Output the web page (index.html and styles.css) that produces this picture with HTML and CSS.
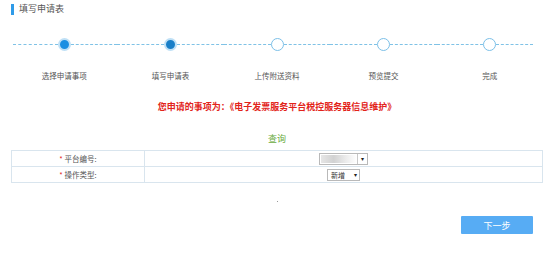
FILE: index.html
```html
<!DOCTYPE html>
<html lang="zh-CN">
<head>
    <meta charset="UTF-8">
    <title>填写申请表</title>
    <link rel="stylesheet" href="styles.css">
</head>
<body>
    <div class="page">
        <h2 class="title">填写申请表</h2>

        <ul class="steps">
            <li class="step done">
                <div class="track"><span class="line"></span><span class="dot"></span><span class="line"></span></div>
                <p>选择申请事项</p>
            </li>
            <li class="step current">
                <div class="track"><span class="line"></span><span class="dot"></span><span class="line"></span></div>
                <p>填写申请表</p>
            </li>
            <li class="step">
                <div class="track"><span class="line"></span><span class="dot"></span><span class="line"></span></div>
                <p>上传附送资料</p>
            </li>
            <li class="step">
                <div class="track"><span class="line"></span><span class="dot"></span><span class="line"></span></div>
                <p>预览提交</p>
            </li>
            <li class="step">
                <div class="track"><span class="line"></span><span class="dot"></span><span class="line"></span></div>
                <p>完成</p>
            </li>
        </ul>

        <p class="notice">您申请的事项为：《电子发票服务平台税控服务器信息维护》</p>

        <h3 class="query">查询</h3>

        <table class="form-table">
            <tr>
                <td class="label"><i>*</i> 平台编号:</td>
                <td class="field">
                    <span class="select wide"><span class="value blur"></span><span class="arrow">&#9662;</span></span>
                </td>
            </tr>
            <tr>
                <td class="label"><i>*</i> 操作类型:</td>
                <td class="field">
                    <span class="select"><span class="value">新增</span><span class="arrow plain">&#9662;</span></span>
                </td>
            </tr>
        </table>

        <div class="spacer"><span class="mark"></span></div>

        <div class="actions">
            <button type="button" class="next-btn">下一步</button>
        </div>
    </div>
</body>
</html>
```

FILE: styles.css
```css
body {
    margin: 0;
    padding: 0;
    background-color: #fff;
    font-family: "Noto Sans CJK SC", "Noto Sans", sans-serif;
    color: #555;
}

.page {
    padding: 0 10px 0 11px;
}

.title {
    margin: 4px 0 0;
    padding: 0 0 0 5px;
    height: 11px;
    line-height: 10px;
    font-size: 9px;
    font-weight: normal;
    color: #555;
    border-left: 3px solid #2f9be8;
    box-sizing: border-box;
}

.steps {
    list-style: none;
    margin: 23px 0 0;
    padding: 0;
    display: flex;
}

.step {
    flex: 1;
    text-align: center;
}

.track {
    display: flex;
    align-items: center;
    height: 13px;
}

.line {
    flex: 1;
    border-top: 1px dashed #7fc2e6;
}

.step:first-child .line:first-child {
    flex: 0 0 45px;
    margin-left: 2px;
}

.step:last-child .line:first-child {
    flex: 0 0 46px;
}

.step:last-child .line:last-child {
    flex: 0 0 37px;
}

.dot {
    width: 11px;
    height: 11px;
    border: 1px solid #7cc0e8;
    border-radius: 50%;
    background: #fff;
    box-sizing: content-box;
}

.done .dot,
.current .dot {
    width: 9px;
    height: 9px;
    border: 2px solid #bfe0f6;
    background: #1b8fe2;
}

.current .dot {
    background: #1a7fc8;
}

.step p {
    margin: 20px 0 0;
    font-size: 7.5px;
    line-height: 10px;
    color: #555;
}

.notice {
    margin: 20px 0 0;
    text-align: center;
    font-size: 9px;
    font-weight: bold;
    line-height: 12px;
    color: #e2231a;
}

.query {
    margin: 20px 0 0;
    text-align: center;
    font-size: 9px;
    font-weight: normal;
    line-height: 12px;
    color: #6aab3e;
}

.form-table {
    width: 100%;
    margin-top: 5px;
    border-collapse: collapse;
    font-size: 7.5px;
}

.form-table td {
    height: 15px;
    padding: 0;
    border: 1px solid #d9e5ee;
    text-align: center;
}

.form-table .label {
    width: 132px;
    color: #555;
}

.label i {
    font-style: normal;
    color: #e2231a;
}

.select {
    display: inline-flex;
    align-items: stretch;
    height: 10px;
    border: 1px solid #b9b9b9;
    background: #fff;
    vertical-align: middle;
    font-size: 7px;
    color: #333;
}

.select .value {
    padding: 0 6px 0 3px;
    line-height: 10px;
}

.select.wide .value {
    width: 36px;
    padding: 0;
}

.value.blur {
    background: linear-gradient(90deg, #e6e6e6 0%, #d2d2d2 35%, #ececec 70%, #fff 100%);
    margin: 1px 0 1px 1px;
}

.select .arrow {
    width: 9px;
    border-left: 1px solid #c8c8c8;
    font-size: 6px;
    line-height: 10px;
    color: #222;
    text-align: center;
}

.select .arrow.plain {
    border-left: none;
    width: 8px;
}

.spacer {
    height: 19px;
    text-align: center;
}

.mark {
    display: inline-block;
    width: 1px;
    height: 1px;
    margin-top: 18px;
    background: #999;
}

.actions {
    display: flex;
    justify-content: flex-end;
    margin-top: 14px;
}

.next-btn {
    width: 72px;
    height: 18px;
    margin-right: 10px;
    border: none;
    border-radius: 1px;
    background-color: #57acf4;
    color: #fff;
    font-family: "Noto Sans CJK SC", sans-serif;
    font-size: 9px;
    cursor: pointer;
}
```
